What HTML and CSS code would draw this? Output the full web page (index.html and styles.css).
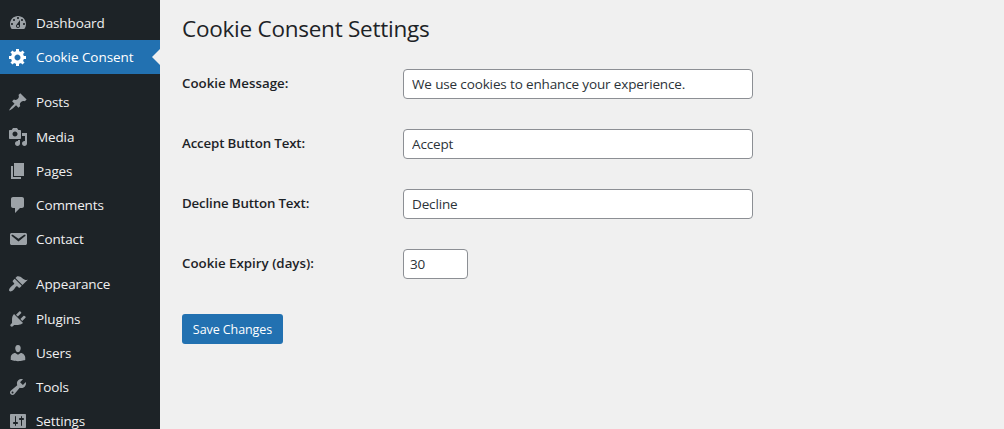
FILE: index.html
```html
<!DOCTYPE html>
<html lang="en">
<head>
<meta charset="utf-8">
<title>Cookie Consent Settings</title>
<link rel="stylesheet" href="styles.css">
</head>
<body>
<div class="admin">
  <nav class="menu">
    <a class="item"><svg class="icon" viewBox="0 0 20 20"><path d="M3.76 16h12.48c1.1-1.37 1.76-3.11 1.76-5 0-4.42-3.58-8-8-8s-8 3.58-8 8c0 1.89.66 3.63 1.76 5zM10 4c.55 0 1 .45 1 1s-.45 1-1 1-1-.45-1-1 .45-1 1-1zM6 6c.55 0 1 .45 1 1s-.45 1-1 1-1-.45-1-1 .45-1 1-1zm8 0c.55 0 1 .45 1 1s-.45 1-1 1-1-.45-1-1 .45-1 1-1zm-5.37 5.55L12 7v6c0 1.1-.9 2-2 2s-2-.9-2-2c0-.57.24-1.08.63-1.45zM4 10c.55 0 1 .45 1 1s-.45 1-1 1-1-.45-1-1 .45-1 1-1zm12 0c.55 0 1 .45 1 1s-.45 1-1 1-1-.45-1-1 .45-1 1-1zm-5 3c0-.55-.45-1-1-1s-1 .45-1 1 .45 1 1 1 1-.45 1-1z"/></svg><span>Dashboard</span></a>
    <a class="item current"><svg class="icon" viewBox="0 0 20 20"><path d="M18 12h-2.18c-.17.7-.44 1.35-.81 1.93l1.54 1.54-2.1 2.1-1.54-1.54c-.58.36-1.23.63-1.91.79V19H8v-2.18c-.68-.16-1.33-.43-1.91-.79l-1.54 1.54-2.12-2.12 1.54-1.54c-.36-.58-.63-1.23-.79-1.91H1V9.03h2.17c.16-.7.44-1.35.8-1.94L2.43 5.55l2.1-2.1 1.54 1.54c.58-.37 1.24-.64 1.93-.81V2h3v2.18c.68.16 1.33.43 1.91.79l1.54-1.54 2.12 2.12-1.54 1.54c.36.59.64 1.24.8 1.94H18V12zm-8.5 1.5c1.66 0 3-1.34 3-3s-1.34-3-3-3-3 1.34-3 3 1.34 3 3 3z"/></svg><span>Cookie Consent</span></a>
    <div class="separator"></div>
    <a class="item"><svg class="icon" viewBox="0 0 20 20"><path d="M10.44 3.02l1.82-1.82 6.36 6.35-1.83 1.82c-1.05-.68-2.48-.57-3.41.36l-.75.75c-.92.93-1.04 2.35-.35 3.41l-1.83 1.82-2.41-2.41-2.8 2.79c-.42.42-3.38 2.71-3.8 2.29s1.86-3.39 2.28-3.81l2.79-2.79L4.1 9.36l1.83-1.82c1.05.69 2.48.57 3.4-.36l.75-.75c.93-.92 1.05-2.35.36-3.41z"/></svg><span>Posts</span></a>
    <a class="item"><svg class="icon" viewBox="0 0 20 20"><path d="M13 11V4c0-.55-.45-1-1-1h-1.67L9 1H5L3.67 3H2c-.55 0-1 .45-1 1v7c0 .55.45 1 1 1h10c.55 0 1-.45 1-1zM7 4.5c1.38 0 2.5 1.12 2.5 2.5S8.38 9.5 7 9.5 4.5 8.38 4.5 7 5.62 4.5 7 4.5zM14 6h5v10.5c0 1.38-1.12 2.5-2.5 2.5S14 17.88 14 16.5s1.12-2.5 2.5-2.5c.17 0 .34.02.5.05V9h-3V6zm-4 8.05V13h2v3.5c0 1.38-1.12 2.5-2.5 2.5S7 17.88 7 16.5 8.12 14 9.5 14c.17 0 .34.02.5.05z"/></svg><span>Media</span></a>
    <a class="item"><svg class="icon" viewBox="0 0 20 20"><path d="M6 15V2h10v13H6zm-1 1h8v2H3V5h2v11z"/></svg><span>Pages</span></a>
    <a class="item"><svg class="icon" viewBox="0 0 20 20"><path d="M5 2h9c1.1 0 2 .9 2 2v7c0 1.1-.9 2-2 2h-2l-5 5v-5H5c-1.1 0-2-.9-2-2V4c0-1.1.9-2 2-2z"/></svg><span>Comments</span></a>
    <a class="item"><svg class="icon" viewBox="0 0 20 20"><path d="M3.87 4h13.25C18.37 4 19 4.59 19 5.79v8.42c0 1.19-.63 1.79-1.88 1.79H3.87c-1.25 0-1.88-.6-1.88-1.79V5.79c0-1.2.63-1.79 1.88-1.79zm6.62 8.6l6.74-5.53c.24-.2.43-.66.13-1.07-.29-.41-.82-.42-1.17-.17l-5.7 3.86L4.8 5.83c-.35-.25-.88-.24-1.17.17-.3.41-.11.87.13 1.07z"/></svg><span>Contact</span></a>
    <div class="separator"></div>
    <a class="item"><svg class="icon" viewBox="0 0 20 20"><path d="M14.48 11.06L7.41 3.99l1.5-1.5c.5-.56 2.3-.47 3.51.32 1.21.8 1.43 1.28 2.91 2.1 1.18.64 2.45 1.26 4.45.85zm-.71.71L6.7 4.7 4.93 6.47c-.39.39-.39 1.02 0 1.41l1.06 1.06c.39.39.39 1.03 0 1.42-.6.6-1.43 1.11-2.21 1.69-.35.26-.7.53-1.01.84C1.43 14.23.4 16.08 1.4 17.07c.99 1 2.84-.03 4.18-1.36.31-.31.58-.66.85-1.02.57-.78 1.08-1.61 1.69-2.21.39-.39 1.02-.39 1.41 0l1.06 1.06c.39.39 1.02.39 1.41 0z"/></svg><span>Appearance</span></a>
    <a class="item"><svg class="icon" viewBox="0 0 20 20"><path d="M13.11 4.36L9.87 7.6 8 5.73l3.24-3.24c.35-.34 1.05-.2 1.56.32.52.51.66 1.21.31 1.55zm-8 1.77l.91-1.12 9.01 9.01-1.19.84c-.71.71-2.63 1.16-3.82 1.16H6.14L4.9 17.26c-.59.59-1.54.59-2.12 0-.59-.58-.59-1.53 0-2.12l1.24-1.24v-3.88c0-1.13.4-3.19 1.09-3.89zm7.26 3.97l3.24-3.24c.34-.35 1.04-.21 1.55.31.52.51.66 1.21.31 1.55l-3.24 3.25z"/></svg><span>Plugins</span></a>
    <a class="item"><svg class="icon" viewBox="0 0 20 20"><path d="M10 9.25c-2.27 0-2.73-3.44-2.73-3.44C7 4.02 7.82 2 9.97 2c2.16 0 2.98 2.02 2.71 3.81 0 0-.41 3.44-2.68 3.44zm0 2.57L12.72 10c2.39 0 4.52 2.33 4.52 4.53v2.49s-3.65 1.13-7.24 1.13c-3.65 0-7.24-1.13-7.24-1.13v-2.49c0-2.25 1.94-4.48 4.47-4.48z"/></svg><span>Users</span></a>
    <a class="item"><svg class="icon" viewBox="0 0 20 20"><path d="M16.68 9.77c-1.34 1.34-3.3 1.67-4.95.99l-5.41 6.52c-.99.99-2.59.99-3.58 0s-.99-2.59 0-3.57l6.52-5.42c-.68-1.65-.35-3.61.99-4.95 1.28-1.28 3.12-1.62 4.72-1.06l-2.89 2.89 2.82 2.82 2.86-2.87c.53 1.58.18 3.39-1.08 4.65zM3.81 16.21c.4.39 1.04.39 1.43 0 .4-.4.4-1.04 0-1.43-.39-.4-1.03-.4-1.43 0-.39.39-.39 1.03 0 1.43z"/></svg><span>Tools</span></a>
    <a class="item"><svg class="icon" viewBox="0 0 20 20"><path d="M18 16V4c0-.55-.45-1-1-1H3c-.55 0-1 .45-1 1v12c0 .55.45 1 1 1h14c.55 0 1-.45 1-1zM8 11h1c.55 0 1 .45 1 1s-.45 1-1 1H8v1.5c0 .28-.22.5-.5.5s-.5-.22-.5-.5V13H6c-.55 0-1-.45-1-1s.45-1 1-1h1V5.5c0-.28.22-.5.5-.5s.5.22.5.5V11zm5-2h-1c-.55 0-1-.45-1-1s.45-1 1-1h1V5.5c0-.28.22-.5.5-.5s.5.22.5.5V7h1c.55 0 1 .45 1 1s-.45 1-1 1h-1v5.5c0 .28-.22.5-.5.5s-.5-.22-.5-.5V9z"/></svg><span>Settings</span></a>
  </nav>
  <main class="content">
    <h1 class="title">Cookie Consent Settings</h1>
    <form class="form">
      <div class="row"><label class="label" for="message">Cookie Message:</label><input class="field" id="message" type="text" value="We use cookies to enhance your experience."></div>
      <div class="row"><label class="label tight" for="accept">Accept Button Text:</label><input class="field" id="accept" type="text" value="Accept"></div>
      <div class="row"><label class="label tight" for="decline">Decline Button Text:</label><input class="field" id="decline" type="text" value="Decline"></div>
      <div class="row"><label class="label" for="expiry">Cookie Expiry (days):</label><input class="field small" id="expiry" type="text" value="30"></div>
      <button class="save" type="button">Save Changes</button>
    </form>
  </main>
</div>
</body>
</html>
```
FILE: styles.css
```css
* { box-sizing: border-box; }
body {
  margin: 0;
  height: 429px;
  overflow: hidden;
  background: #f0f0f0;
  color: #1d2327;
  font-family: "Open Sans", "Noto Sans", sans-serif;
  font-size: 14px;
}
.admin { display: flex; height: 429px; overflow: hidden; }
.menu {
  flex: none;
  width: 160px;
  padding-top: 6px;
  background: #1d2327;
}
.item {
  position: relative;
  display: flex;
  align-items: center;
  gap: 8px;
  height: 34.2px;
  padding-left: 8px;
  color: #f0f0f1;
  font-size: 13.5px;
  line-height: 18px;
  letter-spacing: -0.12px;
  white-space: nowrap;
}
.icon { flex: none; width: 20px; height: 20px; fill: #9ca2a7; }
.current { background: #2271b1; color: #fff; letter-spacing: -0.06px; }
.current .icon { fill: #fff; }
.current::after {
  content: "";
  position: absolute;
  right: 0;
  top: 9px;
  border: 8px solid transparent;
  border-left-width: 0;
  border-right-color: #f0f0f0;
}
.separator { height: 11px; }
.content { flex: 1; padding: 14px 22px; }
.title {
  margin: 0;
  font-size: 22.5px;
  font-weight: 400;
  line-height: 30px;
  letter-spacing: -0.25px;
}
.form { padding-top: 25px; }
.row {
  display: flex;
  align-items: flex-start;
  height: 60px;
}
.label {
  width: 221px;
  font-size: 13.3px;
  font-weight: 600;
  line-height: 18px;
  padding-top: 5px;
}
.tight { letter-spacing: -0.15px; }
.field {
  width: 350px;
  height: 30px;
  margin: 0;
  padding: 0 8px;
  border: 1px solid #8c8f94;
  border-radius: 4px;
  background: #fff;
  color: #2c3338;
  font: 13.5px "Open Sans", "Noto Sans", sans-serif;
  letter-spacing: -0.14px;
}
.small { width: 65px; padding: 0 6px; }
.save {
  display: block;
  width: 101px;
  height: 30px;
  margin-top: 5px;
  padding: 0;
  border: 0;
  border-radius: 3px;
  background: #2271b1;
  color: #fff;
  font: 12.5px "Open Sans", "Noto Sans", sans-serif;
  letter-spacing: -0.08px;
}
```
